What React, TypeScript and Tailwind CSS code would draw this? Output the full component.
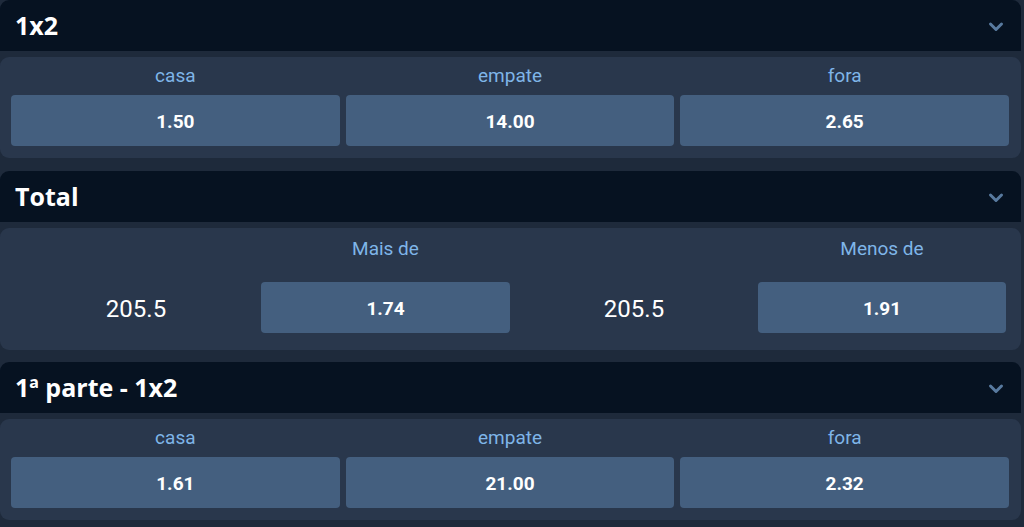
import React from "react";

const Chevron = () => (
  <svg width="16" height="12" viewBox="0 0 16 12" className="mt-[3px]">
    <polyline
      points="2.5,3 8,8.5 13.5,3"
      fill="none"
      stroke="#587a9f"
      strokeWidth="3"
      strokeLinecap="round"
      strokeLinejoin="round"
    />
  </svg>
);

const Header = ({ title }: { title: string }) => (
  <div className="h-[51px] bg-[#061221] rounded-t-[9px] flex items-center justify-between pl-[15px] pr-[17px]">
    <span
      className="text-white font-bold text-[25px] leading-none"
      style={{ fontFamily: '"Open Sans", "Noto Sans", sans-serif' }}
    >
      {title}
    </span>
    <Chevron />
  </div>
);

const Odd = ({ v }: { v: string }) => (
  <div className="h-[51px] bg-[#445f7f] rounded-[4px] flex items-center justify-center pt-[3px] text-white font-bold text-[19px]">
    {v}
  </div>
);

const ThreeWay = ({ title, odds }: { title: string; odds: string[] }) => {
  const labels = ["casa", "empate", "fora"];
  return (
    <div>
      <Header title={title} />
      <div className="mt-[6px] bg-[#29374c] rounded-[9px] pl-[11px] pr-[12px] pt-[7px] pb-[12px] grid grid-cols-3 gap-x-[6px]">
        {labels.map((l, i) => (
          <div key={l} className="flex flex-col">
            <div className="h-[24px] leading-[24px] text-center text-[19px] text-[#7fb5e8] mb-[7px]">{l}</div>
            <Odd v={odds[i]} />
          </div>
        ))}
      </div>
    </div>
  );
};

const TotalSection = () => (
  <div>
    <Header title="Total" />
    <div className="mt-[6px] bg-[#29374c] rounded-[9px] pl-[11px] pt-[9px] pb-[17px]">
      <div className="grid grid-cols-[250px_249px_248px_248px]">
        <div />
        <div className="h-[24px] leading-[24px] text-center text-[19px] text-[#7fb5e8]">Mais de</div>
        <div />
        <div className="h-[24px] leading-[24px] text-center text-[19px] text-[#7fb5e8]">Menos de</div>
      </div>
      <div className="mt-[21px] grid grid-cols-[250px_249px_248px_248px] items-center">
        <div className="text-center text-white text-[24px] pt-[2px]">205.5</div>
        <Odd v="1.74" />
        <div className="text-center text-white text-[24px] pt-[2px]">205.5</div>
        <Odd v="1.91" />
      </div>
    </div>
  </div>
);

export default function App() {
  return (
    <div
      className="w-[1024px] h-[527px] overflow-hidden bg-[#1e2a3b] pr-[3px] flex flex-col"
      style={{ fontFamily: 'Roboto, "Liberation Sans", sans-serif' }}
    >
      <div className="mb-[13px]">
        <ThreeWay title="1x2" odds={["1.50", "14.00", "2.65"]} />
      </div>
      <div className="mb-[12px]">
        <TotalSection />
      </div>
      <ThreeWay title="1ª parte - 1x2" odds={["1.61", "21.00", "2.32"]} />
    </div>
  );
}
